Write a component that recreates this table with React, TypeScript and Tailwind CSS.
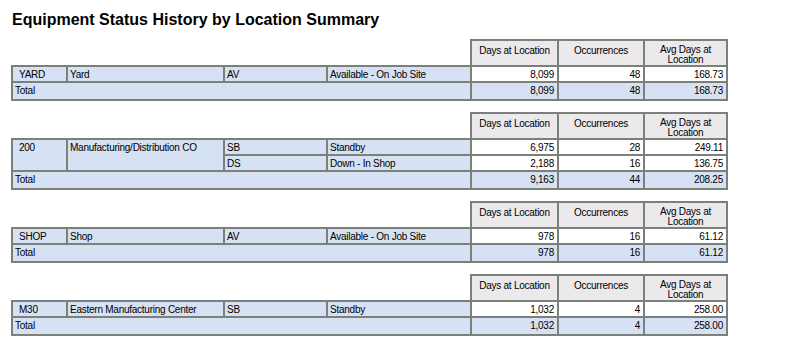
import React from 'react';

type Row = { status: string; desc: string; days: string; occ: string; avg: string };
type Loc = { code: string; name: string; rows: Row[]; total: [string, string, string] };

const LOCATIONS: Loc[] = [
  {
    code: 'YARD', name: 'Yard',
    rows: [{ status: 'AV', desc: 'Available - On Job Site', days: '8,099', occ: '48', avg: '168.73' }],
    total: ['8,099', '48', '168.73'],
  },
  {
    code: '200', name: 'Manufacturing/Distribution CO',
    rows: [
      { status: 'SB', desc: 'Standby', days: '6,975', occ: '28', avg: '249.11' },
      { status: 'DS', desc: 'Down - In Shop', days: '2,188', occ: '16', avg: '136.75' },
    ],
    total: ['9,163', '44', '208.25'],
  },
  {
    code: 'SHOP', name: 'Shop',
    rows: [{ status: 'AV', desc: 'Available - On Job Site', days: '978', occ: '16', avg: '61.12' }],
    total: ['978', '16', '61.12'],
  },
  {
    code: 'M30', name: 'Eastern Manufacturing Center',
    rows: [{ status: 'SB', desc: 'Standby', days: '1,032', occ: '4', avg: '258.00' }],
    total: ['1,032', '4', '258.00'],
  },
];

const blue = 'bg-[#d6e2f3]';

function LocationTable({ loc }: { loc: Loc }) {
  // location code + name cells span every status row of the location
  const span = loc.rows.length > 1 ? 'row-span-2' : 'h-[14px]';
  return (
    <div className="mt-[11px] first:mt-[10px]">
      <div className="ml-[459px] w-fit grid grid-cols-[85px_84px_81px] gap-x-[2px] px-[2px] pt-[2px] bg-[#7b807b]">
        <div className="h-[24px] bg-[#ece9ec] text-center pt-[5px] leading-[10px]">Days at Location</div>
        <div className="h-[24px] bg-[#ece9ec] text-center pt-[5px] leading-[10px]">Occurrences</div>
        <div className="h-[24px] bg-[#ece9ec] text-center pt-[4px] leading-[10px] px-[8px]">Avg Days at Location</div>
      </div>
      <div className="w-fit grid grid-cols-[53px_155px_101px_142px_85px_84px_81px] gap-[2px] p-[2px] bg-[#7b807b] leading-[15px]">
        {loc.rows.map((r, i) => (
          <React.Fragment key={i}>
            {i === 0 && <div className={`${blue} ${span} pl-[6px]`}>{loc.code}</div>}
            {i === 0 && <div className={`${blue} ${span} pl-[2px]`}>{loc.name}</div>}
            <div className={`${blue} h-[14px] pl-[2px]`}>{r.status}</div>
            <div className={`${blue} h-[14px] pl-[2px]`}>{r.desc}</div>
            <div className="bg-white h-[14px] text-right pr-[3px]">{r.days}</div>
            <div className="bg-white h-[14px] text-right pr-[3px]">{r.occ}</div>
            <div className="bg-white h-[14px] text-right pr-[3px]">{r.avg}</div>
          </React.Fragment>
        ))}
        <div className={`${blue} col-span-4 h-[16px] pl-[2px]`}>Total</div>
        {loc.total.map((t, i) => (
          <div key={i} className={`${blue} h-[16px] text-right pr-[3px]`}>{t}</div>
        ))}
      </div>
    </div>
  );
}

export default function App() {
  return (
    <div className="w-[785px] h-[360px] bg-white text-black font-['Liberation_Sans',Arial,sans-serif] pl-[11px] pt-[11px]">
      <h1 className="text-[16px] leading-[18px] font-bold pl-[1px]">Equipment Status History by Location Summary</h1>
      <div className="text-[10px] tracking-[-0.25px]">
        {LOCATIONS.map(loc => <LocationTable key={loc.code} loc={loc} />)}
      </div>
    </div>
  );
}
